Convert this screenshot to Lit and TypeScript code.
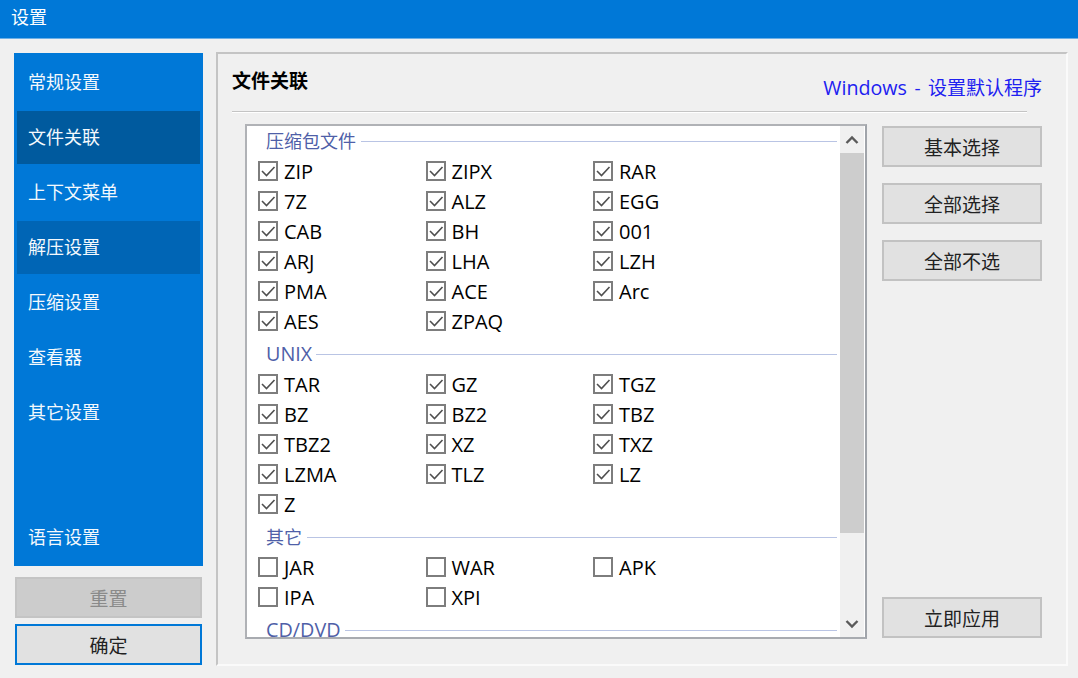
import { LitElement, html, css } from "lit";
import { customElement } from "lit/decorators.js";

interface Group { title: string; latin: boolean; on: boolean; items: string[] }

const GROUPS: Group[] = [
  { title: "压缩包文件", latin: false, on: true, items: ["ZIP", "ZIPX", "RAR", "7Z", "ALZ", "EGG", "CAB", "BH", "001", "ARJ", "LHA", "LZH", "PMA", "ACE", "Arc", "AES", "ZPAQ"] },
  { title: "UNIX", latin: true, on: true, items: ["TAR", "GZ", "TGZ", "BZ", "BZ2", "TBZ", "TBZ2", "XZ", "TXZ", "LZMA", "TLZ", "LZ", "Z"] },
  { title: "其它", latin: false, on: false, items: ["JAR", "WAR", "APK", "IPA", "XPI"] },
  { title: "CD/DVD", latin: true, on: false, items: [] },
];

const NAV = ["常规设置", "文件关联", "上下文菜单", "解压设置", "压缩设置", "查看器", "其它设置"];

@customElement("app-root")
export class AppRoot extends LitElement {
  static styles = css`
    :host {
      display: block;
      width: 1078px;
      height: 678px;
      overflow: hidden;
      background: #f0f0f0;
      font-family: "Open Sans", "Noto Sans CJK SC", sans-serif;
      font-size: 18px;
      color: #111;
    }
    .titlebar {
      height: 39px;
      box-sizing: border-box;
      background: #0078d7;
      border-bottom: 1px solid #6db0e6;
      color: #fff;
      padding: 0 11px 7px;
      display: flex;
      align-items: center;
      font-size: 18px;
    }
    .main {
      display: flex;
      align-items: flex-start;
      padding: 13px 10px 0 14px;
      gap: 13px;
    }
    .left {
      width: 189px;
      display: flex;
      flex-direction: column;
    }
    .nav {
      height: 513px;
      margin-top: 1px;
      box-sizing: border-box;
      padding: 3px;
      background: #0078d7;
      display: flex;
      flex-direction: column;
      gap: 2px;
    }
    .nav-item {
      height: 53px;
      flex: none;
      box-sizing: border-box;
      display: flex;
      align-items: center;
      padding: 0 0 4px 11px;
      color: #f4f9fd;
    }
    .nav-item.active { background: #005a9e; }
    .nav-item.hover { background: #0065b5; }
    .nav-item.last { margin-top: auto; padding-bottom: 2px; }
    .btn {
      box-sizing: border-box;
      border: 2px solid #c2c2c2;
      background: #e1e1e1;
      display: flex;
      align-items: center;
      justify-content: center;
      color: #222;
      font-size: 19px;
    }
    .left .btn { height: 41px; margin: 0 1px; }
    .left .reset { margin-top: 11px; background: #cccccc; border-color: #c4c4c4; color: #8a8a8a; }
    .left .ok { margin-top: 6px; border-color: #0078d7; }
    .panel {
      width: 852px;
      height: 614px;
      box-sizing: border-box;
      border-top: 2px solid #c4c4c4;
      border-left: 2px solid #c4c4c4;
      border-right: 2px solid #fafafa;
      border-bottom: 2px solid #fafafa;
      padding: 0 0 0 14px;
    }
    .head {
      height: 57px;
      width: 810px;
      display: flex;
      justify-content: space-between;
    }
    .head h1 {
      margin: 13px 0 0;
      font-size: 19px;
      line-height: 28px;
      font-weight: 700;
      color: #000;
    }
    .link {
      margin-top: 20px;
      line-height: 28px;
      font-size: 19px;
      color: #2020f0;
      word-spacing: 2.5px;
    }
    .link .en { font-size: 19.7px; }
    .rule {
      width: 795px;
      height: 1px;
      background: #c4c4c4;
      border-bottom: 1px solid #fff;
    }
    .body {
      display: flex;
      margin: 11px 0 0 13px;
      gap: 15px;
    }
    .list {
      width: 622px;
      height: 515px;
      box-sizing: border-box;
      border: 2px solid #b0b2b6;
      border-right-color: #a0a4aa;
      border-bottom-color: #a8abb0;
      background: #fff;
      display: flex;
      overflow: hidden;
    }
    .scroll { flex: 1; min-width: 0; overflow: hidden; padding: 5px 3px 0 11px; }
    .legend {
      height: 20px;
      display: flex;
      align-items: center;
      gap: 5px;
      color: #4f5fa8;
      padding-left: 8px;
      font-size: 18px;
    }
    .legend.latin { font-size: 19.8px; gap: 4px; }
    .legend span { margin-bottom: 2px; }
    .legend::after {
      content: "";
      flex: 1;
      height: 1px;
      background: #b9c4e4;
    }
    .grid {
      display: grid;
      grid-template-columns: repeat(3, 167.5px);
      grid-auto-rows: 30px;
      margin: 5px 0 8px;
    }
    .check {
      display: flex;
      align-items: center;
      gap: 6px;
      color: #000;
      font-size: 20px;
    }
    .box {
      width: 20px;
      height: 20px;
      box-sizing: border-box;
      border: 2px solid #7d7d7d;
      background: #fff;
      flex: none;
    }
    .box svg { display: block; }
    .bar {
      width: 24px;
      flex: none;
      background: #f0f0f0;
      display: flex;
      flex-direction: column;
      margin-right: 1px;
    }
    .arrow {
      height: 27px;
      flex: none;
      display: flex;
      align-items: center;
      justify-content: center;
    }
    .thumb { height: 380px; flex: none; background: #cdcdcd; }
    .track { flex: 1; }
    .side {
      width: 160px;
      height: 512px;
      margin-top: 2px;
      display: flex;
      flex-direction: column;
      gap: 16px;
    }
    .side .btn { height: 41px; flex: none; }
    .side .apply { margin-top: auto; }
  `;

  private renderCheck(name: string, on: boolean) {
    return html`<div class="check">
      <span class="box">
        ${on
          ? html`<svg width="16" height="16" viewBox="0 0 16 16"><path d="M2 8 L6.5 12.5 L14.5 4" fill="none" stroke="#4f4f4f" stroke-width="1.6"/></svg>`
          : ""}
      </span>
      <span>${name}</span>
    </div>`;
  }

  render() {
    return html`
      <div class="titlebar">设置</div>
      <div class="main">
        <div class="left">
          <nav class="nav">
            ${NAV.map(
              (n, i) => html`<div class="nav-item ${i === 1 ? "active" : i === 3 ? "hover" : ""}">${n}</div>`
            )}
            <div class="nav-item last">语言设置</div>
          </nav>
          <div class="btn reset">重置</div>
          <div class="btn ok">确定</div>
        </div>
        <section class="panel">
          <div class="head">
            <h1>文件关联</h1>
            <span class="link"><span class="en">Windows</span> - 设置默认程序</span>
          </div>
          <div class="rule"></div>
          <div class="body">
            <div class="list">
              <div class="scroll">
                ${GROUPS.map(
                  (g) => html`
                    <div class="legend ${g.latin ? "latin" : ""}"><span>${g.title}</span></div>
                    <div class="grid">${g.items.map((it) => this.renderCheck(it, g.on))}</div>
                  `
                )}
              </div>
              <div class="bar">
                <div class="arrow">
                  <svg width="14" height="10" viewBox="0 0 14 10"><path d="M1.5 8 L7 2.5 L12.5 8" fill="none" stroke="#5a5a5a" stroke-width="2.4"/></svg>
                </div>
                <div class="thumb"></div>
                <div class="track"></div>
                <div class="arrow">
                  <svg width="14" height="10" viewBox="0 0 14 10"><path d="M1.5 2 L7 7.5 L12.5 2" fill="none" stroke="#5a5a5a" stroke-width="2.4"/></svg>
                </div>
              </div>
            </div>
            <div class="side">
              <div class="btn">基本选择</div>
              <div class="btn">全部选择</div>
              <div class="btn">全部不选</div>
              <div class="btn apply">立即应用</div>
            </div>
          </div>
        </section>
      </div>
    `;
  }
}
